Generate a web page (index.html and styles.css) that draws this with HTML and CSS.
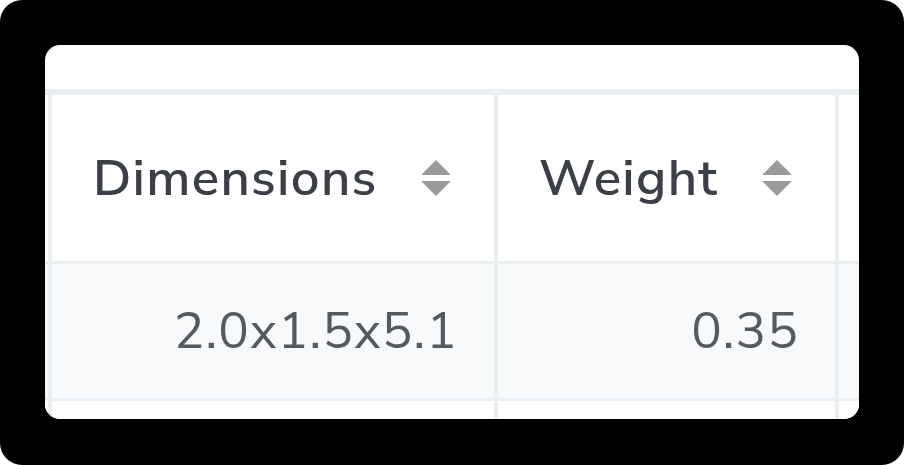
FILE: index.html
```html
<!DOCTYPE html>
<html lang="en">
<head>
<meta charset="utf-8">
<title>Table</title>
<link rel="stylesheet" href="styles.css">
</head>
<body>
<div class="frame">
  <div class="card">
    <div class="grid">
      <div class="cell edge"></div>
      <div class="cell head">
        <span class="label">Dimensions</span>
        <svg class="sort" viewBox="0 0 32 40" aria-hidden="true"><path d="M16 2 L30 16 Q31 17 29.5 17 H2.5 Q1 17 2 16 Z"/><path d="M16 38 L30 24 Q31 23 29.5 23 H2.5 Q1 23 2 24 Z"/></svg>
      </div>
      <div class="cell head">
        <span class="label">Weight</span>
        <svg class="sort" viewBox="0 0 32 40" aria-hidden="true"><path d="M16 2 L30 16 Q31 17 29.5 17 H2.5 Q1 17 2 16 Z"/><path d="M16 38 L30 24 Q31 23 29.5 23 H2.5 Q1 23 2 24 Z"/></svg>
      </div>
      <div class="cell head"></div>

      <div class="cell edge alt"></div>
      <div class="cell num alt">2.0x1.5x5.1</div>
      <div class="cell num alt">0.35</div>
      <div class="cell alt"></div>

      <div class="cell edge"></div>
      <div class="cell"></div>
      <div class="cell"></div>
      <div class="cell"></div>
    </div>
  </div>
</div>
</body>
</html>
```

FILE: styles.css
```css
html, body {
  margin: 0;
  padding: 0;
  background: #ffffff;
}

.frame {
  width: 904px;
  height: 465px;
  box-sizing: border-box;
  background: #000000;
  border-radius: 22px;
  padding: 45px 45px 46px 45px;
}

.card {
  height: 374px;
  background: #ffffff;
  border-radius: 15px;
  overflow: hidden;
  padding-top: 44px;
  box-sizing: border-box;
}

.grid {
  display: grid;
  grid-template-columns: 3px 442px 337px 40px;
  grid-template-rows: 166px 134px 40px;
  column-gap: 4px;
  row-gap: 3px;
  background: #e9eef0;
  padding-top: 6px;
  font-family: "Nunito Sans", Nunito, Lato, "Open Sans", sans-serif;
}

.cell {
  background: #ffffff;
}

.cell.alt {
  background: #f7f9fa;
}

.head {
  display: flex;
  align-items: center;
  justify-content: space-between;
  padding: 0 42px 0 41px;
}

.label {
  font-size: 51px;
  font-weight: 600;
  color: #3b4047;
  letter-spacing: 1.3px;
}

.sort {
  width: 32px;
  height: 40px;
  fill: #9a9a9a;
  flex: none;
}

.num {
  display: flex;
  align-items: center;
  justify-content: flex-end;
  padding-right: 36px;
  font-size: 51px;
  font-weight: 400;
  color: #555a60;
  letter-spacing: 1.1px;
}
```
